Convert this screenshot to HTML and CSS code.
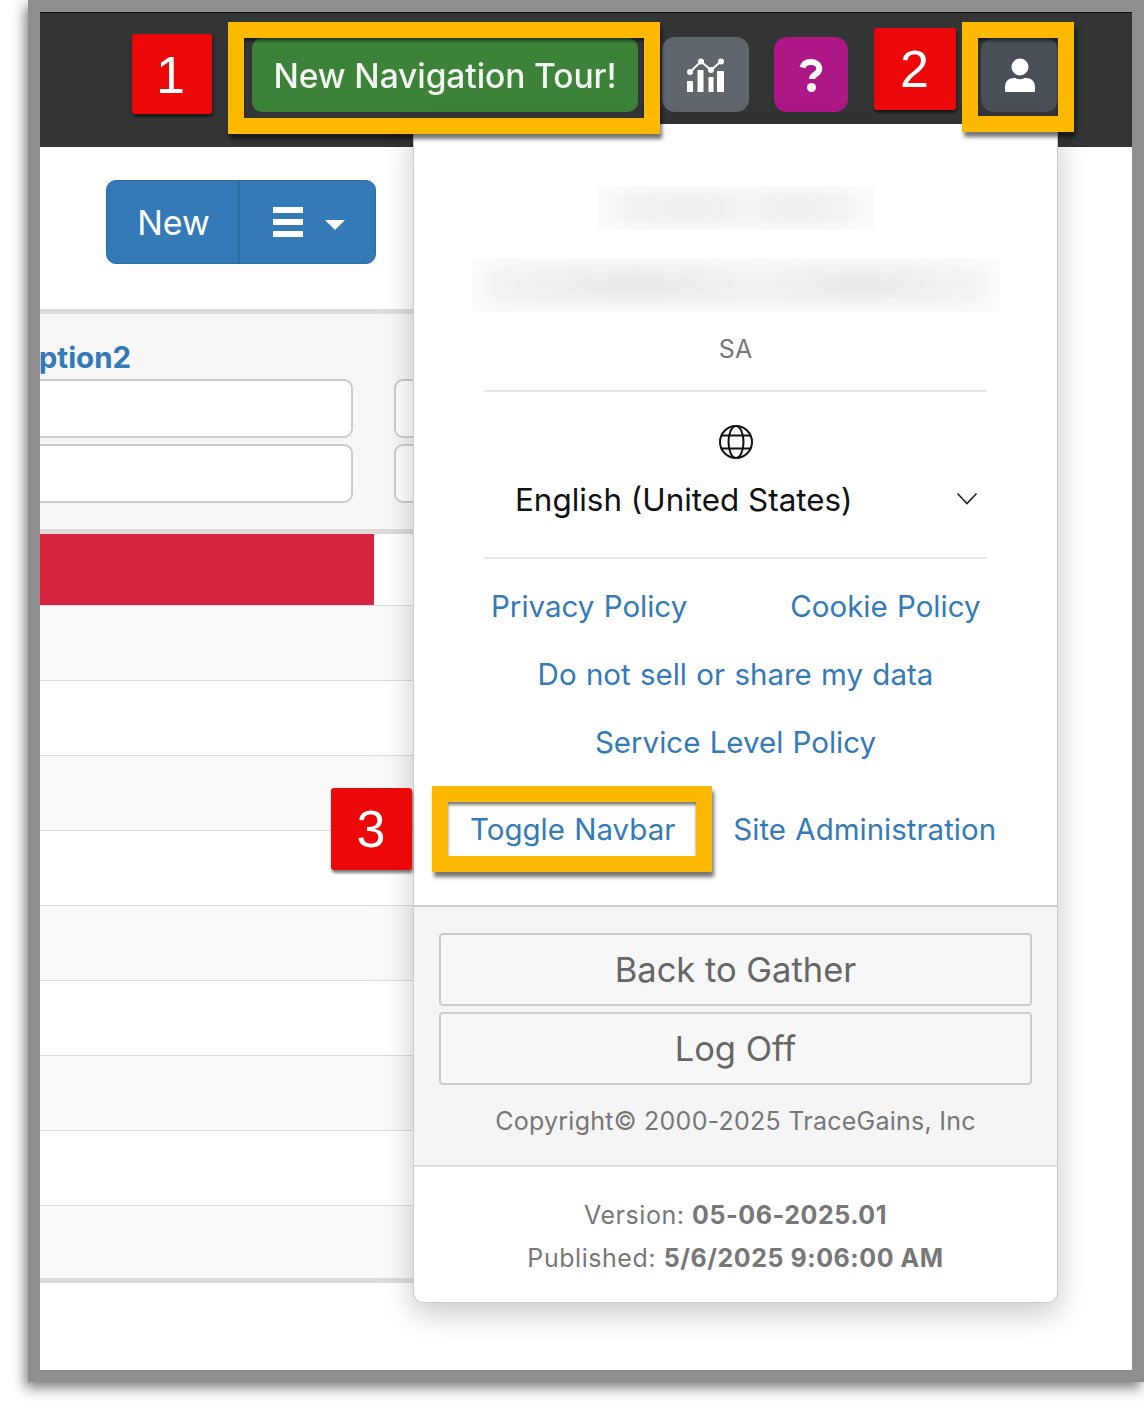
FILE: index.html
```html
<!DOCTYPE html>
<html lang="en">
<head>
<meta charset="utf-8">
<title>Navigation</title>
<link rel="stylesheet" href="styles.css">
</head>
<body>
<div class="frame">
  <div class="page">
    <header class="navbar">
      <button class="nav-btn tour"><span class="tour-label">New Navigation Tour!</span></button>
      <button class="nav-btn chart" aria-label="Analytics">
        <svg width="38" height="34" viewBox="0 0 38 34"><g fill="#fff"><rect x="0" y="23" width="6" height="11"/><rect x="10.500" y="12" width="6" height="22"/><rect x="21.500" y="19" width="5" height="15"/><rect x="30" y="13" width="7" height="21"/><circle cx="3" cy="14" r="3"/><circle cx="14" cy="3.500" r="3"/><circle cx="24" cy="12" r="3"/><circle cx="34" cy="3.500" r="3"/></g><polyline points="3,14 14,3.500 24,12 34,3.500" fill="none" stroke="#fff" stroke-width="2"/></svg>
      </button>
      <button class="nav-btn help" aria-label="Help">
        <svg width="24" height="34" viewBox="0 0 24 34"><path d="M3.500 9.500C4.500 5.500 8 4 12 4c4.500 0 8.300 2.500 8.300 6.700 0 5.800-7.300 5.300-7.300 10.300" fill="none" stroke="#fff" stroke-width="6"/><circle cx="12.500" cy="29.500" r="4.500" fill="#fff"/></svg>
      </button>
      <button class="nav-btn user" aria-label="User">
        <svg width="30" height="34" viewBox="0 0 30 34"><circle cx="15" cy="9" r="8.500" fill="#fff"/><path d="M1 34c-1 0-1-1-1-2v-3c0-6 4-9 9-9h1.500c1.500.9 3 1.300 4.500 1.300s3-.4 4.500-1.300H21c5 0 9 3 9 9v3c0 1 0 2-1 2z" fill="#fff"/></svg>
      </button>
    </header>

    <main class="content">
      <div class="toolbar">
        <div class="btn-group">
          <button class="group-btn new-btn">New</button>
          <button class="group-btn menu-btn" aria-label="Options">
            <span class="burger"><i></i><i></i><i></i></span>
            <span class="caret"></span>
          </button>
        </div>
      </div>
      <section class="grid">
        <div class="filters">
          <div class="filter-col first">
            <div class="filter-label">Option2</div>
            <div class="filter-input"></div>
            <div class="filter-input"></div>
          </div>
          <div class="filter-col second">
            <div class="filter-label">&nbsp;</div>
            <div class="filter-input"></div>
            <div class="filter-input"></div>
          </div>
        </div>
        <div class="row row-danger"><div class="cell"></div></div>
        <div class="row odd"><div class="cell"></div></div>
        <div class="row"><div class="cell"></div></div>
        <div class="row odd"><div class="cell"></div></div>
        <div class="row"><div class="cell"></div></div>
        <div class="row odd"><div class="cell"></div></div>
        <div class="row"><div class="cell"></div></div>
        <div class="row odd"><div class="cell"></div></div>
        <div class="row"><div class="cell"></div></div>
        <div class="row odd last"><div class="cell"></div></div>
      </section>
    </main>
  </div>
</div>

<aside class="menu">
  <div class="blur-box blur-name"><div class="blur-ink"></div></div>
  <div class="blur-box blur-mail"><div class="blur-ink"></div></div>
  <div class="role">SA</div>
  <hr class="rule first-rule">
  <div class="globe">
    <svg width="34" height="34" viewBox="0 0 34 34" fill="none" stroke="#111" stroke-width="2"><circle cx="17" cy="17" r="16"/><ellipse cx="17" cy="17" rx="7.500" ry="16"/><path d="M3 10.500h28M3 23.500h28"/></svg>
  </div>
  <div class="lang">
    <span>English (United States)</span>
    <svg class="chev" width="22" height="14" viewBox="0 0 22 14" fill="none" stroke="#222" stroke-width="1.600"><path d="M1.500 1.500 11 11.500l9.500-10"/></svg>
  </div>
  <hr class="rule second-rule">
  <nav class="links">
    <div class="link-row first-row"><a>Privacy Policy</a><a>Cookie Policy</a></div>
    <div class="link-row center"><a>Do not sell or share my data</a></div>
    <div class="link-row center"><a>Service Level Policy</a></div>
    <div class="link-row last-row"><a>Toggle Navbar</a><a>Site Administration</a></div>
  </nav>
  <div class="menu-foot">
    <button class="foot-btn">Back to Gather</button>
    <button class="foot-btn">Log Off</button>
    <div class="copyright">Copyright© 2000-2025 TraceGains, Inc</div>
  </div>
  <div class="version">Version: <b>05-06-2025.01</b></div>
  <div class="version second-version">Published: <b>5/6/2025 9:06:00 AM</b></div>
</aside>

<div class="callout callout-tour"></div>
<div class="callout callout-user"></div>
<div class="callout callout-toggle"></div>
<div class="badge badge-1">1</div>
<div class="badge badge-2">2</div>
<div class="badge badge-3">3</div>
</body>
</html>
```
FILE: styles.css
```css
* { box-sizing: border-box; }
html, body { margin: 0; padding: 0; }
body {
  position: relative;
  width: 1144px;
  height: 1410px;
  overflow: hidden;
  background: #fff;
  font-family: Inter, "Liberation Sans", sans-serif;
}
button { font-family: inherit; padding: 0; margin: 0; }

.frame {
  margin-left: 28px;
  width: 1116px;
  height: 1382px;
  border: 12px solid #8e8e8e;
  box-shadow: -3px 6px 12px rgba(0,0,0,.5);
}
.page {
  height: 100%;
  border-top: 1px solid #111;
  background: #fff;
  overflow: hidden;
}

.navbar {
  height: 134px;
  background: #333535;
  display: flex;
  justify-content: flex-end;
  align-items: flex-start;
  padding: 24px 74px 0 0;
}
.nav-btn {
  border: 0;
  height: 75px;
  border-radius: 13px;
  display: flex;
  align-items: center;
  justify-content: center;
}
.tour { width: 386px; height: 74px; margin-top: 1px; background: #3c8238; border-radius: 10px; }
.tour-label { color: #f2f7f1; font-size: 33.6px; font-weight: 500; letter-spacing: -.1px; filter: blur(.6px); white-space: nowrap; }
.chart { width: 87px; margin-left: 24px; background: #5f676d; }
.help { width: 74px; margin-left: 25px; background: #ae1886; }
.user { width: 77px; height: 74px; margin-left: 133px; margin-top: 1px; background: #495057; }

.content { width: 420px; }
.toolbar { padding: 33px 0 45px 66px; }
.btn-group {
  display: flex;
  width: 270px;
  height: 84px;
  border-radius: 10px;
  overflow: hidden;
  border: 1px solid #2e6da4;
  background: #337ab7;
}
.group-btn { border: 0; background: transparent; color: #fff; display: flex; align-items: center; }
.new-btn { width: 133px; padding-left: 2px; justify-content: center; font-size: 34px; border-right: 2px solid #2e6da4; }
.menu-btn { flex: 1; padding-left: 33px; }
.burger { display: flex; flex-direction: column; gap: 6px; width: 30px; }
.burger i { display: block; height: 6px; background: #fff; }
.caret {
  margin: 6px 0 0 22px;
  border-left: 10px solid transparent;
  border-right: 10px solid transparent;
  border-top: 10px solid #fff;
}

.grid { border-top: 5px solid #dcdcdc; }
.filters {
  height: 220px;
  background: #f7f7f7;
  border-bottom: 5px solid #dddbda;
  overflow: hidden;
  display: flex;
  gap: 41px;
  padding-top: 25px;
}
.filter-col.first { width: 337px; margin-left: -24px; flex: none; }
.filter-col.second { width: 200px; flex: none; }
.filter-label { height: 40px; line-height: 36px; color: #337ab7; font-size: 29.500px; font-weight: 700; }
.filter-input {
  height: 59px;
  margin-bottom: 6px;
  background: #fff;
  border: 2px solid #ccc;
  border-radius: 9px;
}
.row { height: 75px; border-bottom: 1px solid #ddd; background: #fff; }
.row.odd { background: #f9f9f9; }
.row .cell { width: 334px; height: 100%; border-right: 1px solid #fff; }
.row-danger { height: 72px; }
.row-danger .cell { background: #d62342; border-right: 0; }
.row.last { height: 77px; border-bottom: 5px solid #dcdcdc; }

.menu {
  position: absolute;
  left: 413px;
  top: 124px;
  width: 645px;
  height: 1179px;
  padding-top: 62px;
  background: #fff;
  border: 1px solid #ccc;
  border-top: 0;
  border-radius: 0 0 10px 10px;
  box-shadow: 0 10px 30px rgba(0,0,0,.22);
  color: #777;
  text-align: center;
}
.blur-box { margin: 0 auto; overflow: hidden; background: #fbfbfb; padding: 10px 16px; }
.blur-ink {
  height: 100%;
  background: linear-gradient(90deg, #f1f1f1, #e9e9e9 30%, #f0f0f0 55%, #e9e9e9 75%, #f2f2f2);
  filter: blur(9px);
}
.blur-name { width: 278px; height: 44px; }
.blur-mail { width: 528px; height: 54px; margin-top: 28px; }
.role { height: 38px; line-height: 38px; margin-top: 18px; font-size: 25px; }
.rule { display: block; width: 503px; height: 2px; margin: 0 0 0 70px; border: 0; background: #e7e7e7; }
.first-rule { margin-top: 22px; }
.second-rule { margin-top: 37px; }
.globe { height: 34px; margin-top: 33px; }
.globe svg { display: block; margin: 0 auto; }
.lang {
  position: relative;
  height: 40px;
  line-height: 40px;
  margin-top: 21px;
  padding-left: 101px;
  text-align: left;
  color: #111;
  font-size: 31.400px;
}
.chev { position: absolute; left: 542px; top: 12px; }
.links a { color: #337ab7; white-space: nowrap; }
.link-row { height: 40px; line-height: 38px; margin-top: 28px; font-size: 29.500px; word-spacing: 1px; display: flex; }
.link-row.center { justify-content: center; }
.first-row { padding-left: 77px; gap: 103px; }
.last-row { padding-left: 56px; gap: 58px; margin-top: 47px; }
.menu-foot {
  margin-top: 55px;
  padding: 26px 25px 26px;
  height: 262px;
  background: #f5f5f5;
  border-top: 2px solid #ccc;
  border-bottom: 2px solid #ddd;
}
.foot-btn {
  display: block;
  width: 593px;
  height: 73px;
  margin-bottom: 6px;
  background: #f7f7f7;
  border: 2px solid #ccc;
  border-radius: 4px;
  color: #666;
  font-size: 34.500px;
}
.copyright { height: 36px; line-height: 36px; margin-top: 18px; font-size: 25px; letter-spacing: .25px; white-space: nowrap; }
.version { height: 40px; line-height: 40px; margin-top: 28px; font-size: 25px; letter-spacing: .55px; }
.second-version { margin-top: 3px; }
.version b { font-weight: 700; }

.callout {
  position: absolute;
  border: 16px solid #fcb900;
  box-shadow: 2px 5px 4px rgba(0,0,0,.55), inset 0 3px 3px rgba(0,0,0,.5);
}
.callout-tour { left: 228px; top: 22px; width: 432px; height: 112px; }
.callout-user { left: 962px; top: 22px; width: 112px; height: 110px; }
.callout-toggle { left: 432px; top: 786px; width: 280px; height: 86px; }

.badge {
  position: absolute;
  width: 80px;
  height: 80px;
  border-radius: 3px;
  background: #ec0808;
  box-shadow: 1px 3px 3px rgba(0,0,0,.5);
  color: #fff;
  font-family: "Liberation Sans", Arial, sans-serif;
  font-size: 52px;
  line-height: 82px;
  text-align: center;
}
.badge-1 { left: 132px; top: 34px; text-indent: -3px; }
.badge-2 { left: 874px; top: 28px; width: 82px; height: 82px; text-indent: -1px; }
.badge-3 { left: 331px; top: 788px; width: 81px; height: 82px; text-indent: -1px; }
```
